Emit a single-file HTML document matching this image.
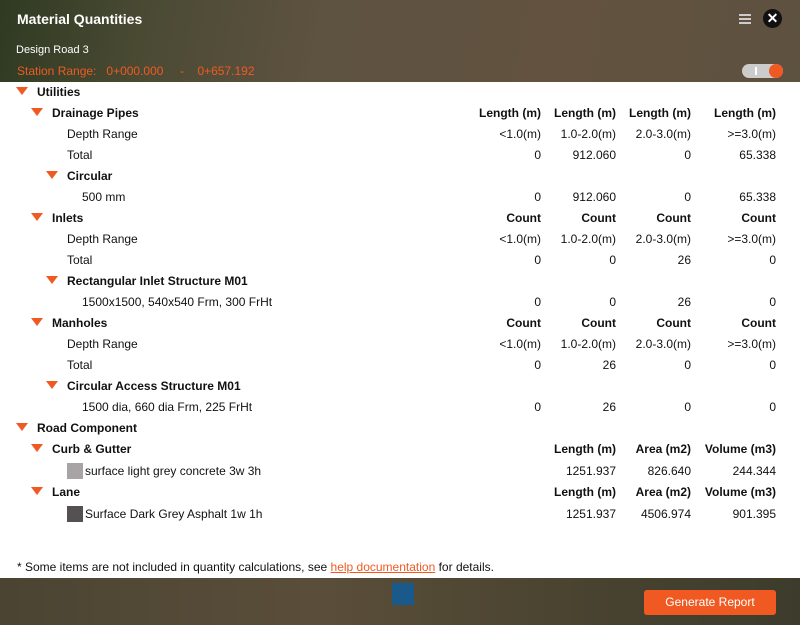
<!DOCTYPE html>
<html><head><style>
*{margin:0;padding:0;box-sizing:border-box}
body{width:800px;height:625px;overflow:hidden;font-family:"Liberation Sans",sans-serif;font-size:12px;color:#111;position:relative;background:#4a4232}
#hdr{position:absolute;left:0;top:0;width:800px;height:82px;background:linear-gradient(100deg,#2f3a22 0%,#4a4a33 18%,#5e5240 40%,#62523f 70%,#5d513f 100%)}
#ftr{position:absolute;left:0;top:578px;width:800px;height:47px;background:linear-gradient(90deg,#4b4432,#5a4e3a 40%,#4a4430 70%,#3d3c2c)}
#main{position:absolute;left:0;top:82px;width:800px;height:496px;background:#fff}
.t{position:absolute;white-space:nowrap}
.r{position:absolute;white-space:nowrap;text-align:right}
.b{font-weight:bold}
.tri{position:absolute;width:0;height:0;border-left:6px solid transparent;border-right:6px solid transparent;border-top:8px solid #f05a22}
</style></head><body>
<div id="hdr"></div>
<div class="t b" style="left:17px;top:11px;font-size:14px;color:#fff">Material Quantities</div>
<div class="t" style="left:16px;top:44px;font-size:11px;color:#fff">Design Road 3</div>
<div class="t" style="left:17px;top:64px;color:#f05a22">Station Range:&nbsp;&nbsp;&nbsp;0+000.000&nbsp;&nbsp;&nbsp;&nbsp;&nbsp;-&nbsp;&nbsp;&nbsp;&nbsp;0+657.192</div>
<div style="position:absolute;left:739px;top:14px;width:12px;height:2px;background:#ccc;box-shadow:0 4px 0 #ccc,0 8px 0 #ccc"></div>
<div style="position:absolute;left:763px;top:9px;width:19px;height:19px;border-radius:50%;background:#111;color:#fff;font-weight:bold;font-size:14px;line-height:19px;text-align:center">✕</div>
<div style="position:absolute;left:742px;top:64px;width:41px;height:14px;border-radius:7px;background:#ccc"></div>
<div style="position:absolute;left:755px;top:67px;width:2px;height:8px;background:#fff"></div>
<div style="position:absolute;left:769px;top:64px;width:14px;height:14px;border-radius:50%;background:#f05a22"></div>
<div id="main"></div>
<div id="ftr"></div>
<div style="position:absolute;left:392px;top:583px;width:22px;height:22px;background:#1a5a8a"></div>
<div style="position:absolute;left:644px;top:590px;width:132px;height:25px;border-radius:3px;background:#f05a22;color:#fff;text-align:center;line-height:25px;font-size:12px">Generate Report</div>
<div id="rows"></div>
<script>
var rows=[
[0,92,"Utilities",1,1],
[1,113,"Drainage Pipes",1,1,["Length (m)","Length (m)","Length (m)","Length (m)"],1],
[2,134,"Depth Range",0,0,["<1.0(m)","1.0-2.0(m)","2.0-3.0(m)",">=3.0(m)"]],
[2,155,"Total",0,0,["0","912.060","0","65.338"]],
[2,176,"Circular",1,1],
[3,197,"500 mm",0,0,["0","912.060","0","65.338"]],
[1,218,"Inlets",1,1,["Count","Count","Count","Count"],1],
[2,239,"Depth Range",0,0,["<1.0(m)","1.0-2.0(m)","2.0-3.0(m)",">=3.0(m)"]],
[2,260,"Total",0,0,["0","0","26","0"]],
[2,281,"Rectangular Inlet Structure M01",1,1],
[3,302,"1500x1500, 540x540 Frm, 300 FrHt",0,0,["0","0","26","0"]],
[1,323,"Manholes",1,1,["Count","Count","Count","Count"],1],
[2,344,"Depth Range",0,0,["<1.0(m)","1.0-2.0(m)","2.0-3.0(m)",">=3.0(m)"]],
[2,365,"Total",0,0,["0","26","0","0"]],
[2,386,"Circular Access Structure M01",1,1],
[3,407,"1500 dia, 660 dia Frm, 225 FrHt",0,0,["0","26","0","0"]],
[0,428,"Road Component",1,1],
[1,449,"Curb & Gutter",1,1,[null,"Length (m)","Area (m2)","Volume (m3)"],1],
[3,471,"surface light grey concrete 3w 3h",0,0,[null,"1251.937","826.640","244.344"],0,"#a8a4a6"],
[1,492,"Lane",1,1,[null,"Length (m)","Area (m2)","Volume (m3)"],1],
[3,514,"Surface Dark Grey Asphalt 1w 1h",0,0,[null,"1251.937","4506.974","901.395"],0,"#555152"]
];
var R=[541,616,691,776],h="";
rows.forEach(function(r){
 var lv=r[0],y=r[1],tx=17+lv*15;
 if(r[4])h+='<div class="tri" style="left:'+(tx-1)+'px;top:'+(y-5)+'px"></div>';
 var x=tx+20;
 if(r[7]){h+='<div style="position:absolute;left:67px;top:'+(y-8)+'px;width:16px;height:16px;background:'+r[7]+'"></div>';x=85;}
 else if(!r[4]&&lv==3)x=82;
 if(!r[4]&&lv==2)x=67;
 h+='<div class="t'+(r[3]?' b':'')+'" style="left:'+x+'px;top:'+(y-7)+'px">'+r[2].replace(/&/g,'&amp;')+'</div>';
 if(r[5])r[5].forEach(function(v,i){if(v==null)return;h+='<div class="r'+(r[6]?' b':'')+'" style="right:'+(800-R[i])+'px;top:'+(y-7)+'px">'+v.replace(/</g,'&lt;').replace(/>/g,'&gt;')+'</div>';});
});
document.getElementById('rows').innerHTML=h;
</script>
<div class="t" style="left:17px;top:560px">* Some items are not included in quantity calculations, see <span style="color:#f05a22;text-decoration:underline">help documentation</span> for details.</div>
</body></html>
